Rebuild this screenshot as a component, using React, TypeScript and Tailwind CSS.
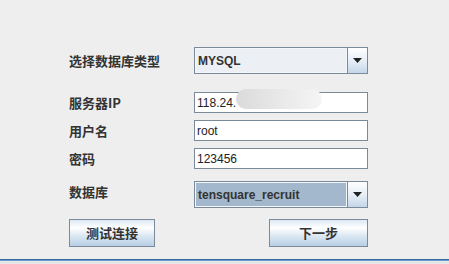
import React from "react";

const labelCls =
  "w-[125px] shrink-0 text-[13px] font-bold text-[#333333] leading-none [font-family:'Noto_Sans_CJK_SC','Liberation_Sans',sans-serif]";

function Arrow() {
  return (
    <div className="w-[20px] h-full shrink-0 border-l border-[#7a8a99] bg-[linear-gradient(#ffffff,#e4edf6_55%,#c4d6e8)] flex items-center justify-center">
      <svg width="9" height="5" viewBox="0 0 9 5">
        <path d="M0 0 H9 L4.5 5 Z" fill="#222" />
      </svg>
    </div>
  );
}

function Combo({ value, selected }: { value: string; selected?: boolean }) {
  return (
    <div className="w-[174px] h-[27px] border border-[#7a8a99] flex">
      <div
        className={`flex-1 flex items-center pl-[2px] border border-[#f4f6f8] text-[12px] font-bold text-[#333333] [font-family:'Liberation_Sans',sans-serif] ${
          selected ? "bg-[#a3b8cc]" : "bg-[#eceff3]"
        }`}
      >
        {value}
      </div>
      <Arrow />
    </div>
  );
}

function Field({ value, children }: { value: string; children?: React.ReactNode }) {
  return (
    <div className="relative w-[174px] h-[21px] bg-white border border-[#7a8a99] border-r-[#7a8a99] flex items-center pl-[2px] text-[12px] text-[#222] [font-family:'Liberation_Sans',sans-serif]">
      {value}
      {children}
    </div>
  );
}

function Button({ label, width }: { label: string; width: string }) {
  return (
    <button
      className={`${width} h-[28px] border border-[#7a8a99] bg-[linear-gradient(#dde8f3_0%,#ffffff_30%,#dde8f3_60%,#b8cfe5_100%)] flex items-center justify-center text-[13px] font-bold text-[#333333] [font-family:'Noto_Sans_CJK_SC','Liberation_Sans',sans-serif]`}
    >
      {label}
    </button>
  );
}

export default function App() {
  return (
    <div className="w-[449px] h-[264px] bg-[#eeeeee] flex flex-col overflow-hidden">
      <div className="h-[259px] pt-[47px] pl-[69px] flex flex-col">
        <div className="flex items-center">
          <span className={labelCls}>选择数据库类型</span>
          <Combo value="MYSQL" />
        </div>

        <div className="flex items-center mt-[18px]">
          <span className={labelCls}>服务器IP</span>
          <Field value="118.24.">
            <div className="absolute left-[41px] top-[-4px] w-[86px] h-[20px] rounded-full bg-[linear-gradient(90deg,#dadada,#e8e8e8_50%,#f5f5f5)]" />
          </Field>
        </div>

        <div className="flex items-center mt-[7px]">
          <span className={labelCls}>用户名</span>
          <Field value="root" />
        </div>

        <div className="flex items-center mt-[7px]">
          <span className={labelCls}>密码</span>
          <Field value="123456" />
        </div>

        <div className="flex items-center mt-[12px]">
          <span className={`${labelCls} -mt-[6px]`}>数据库</span>
          <Combo value="tensquare_recruit" selected />
        </div>

        <div className="flex items-center mt-[11px] w-[299px] justify-between">
          <Button label="测试连接" width="w-[86px]" />
          <Button label="下一步" width="w-[99px]" />
        </div>
      </div>
      <div className="h-[1px] bg-[#2c6aa5]" />
      <div className="h-[1px] bg-[#6f9bc6]" />
      <div className="flex-1 bg-[#e6e6e6]" />
    </div>
  );
}
